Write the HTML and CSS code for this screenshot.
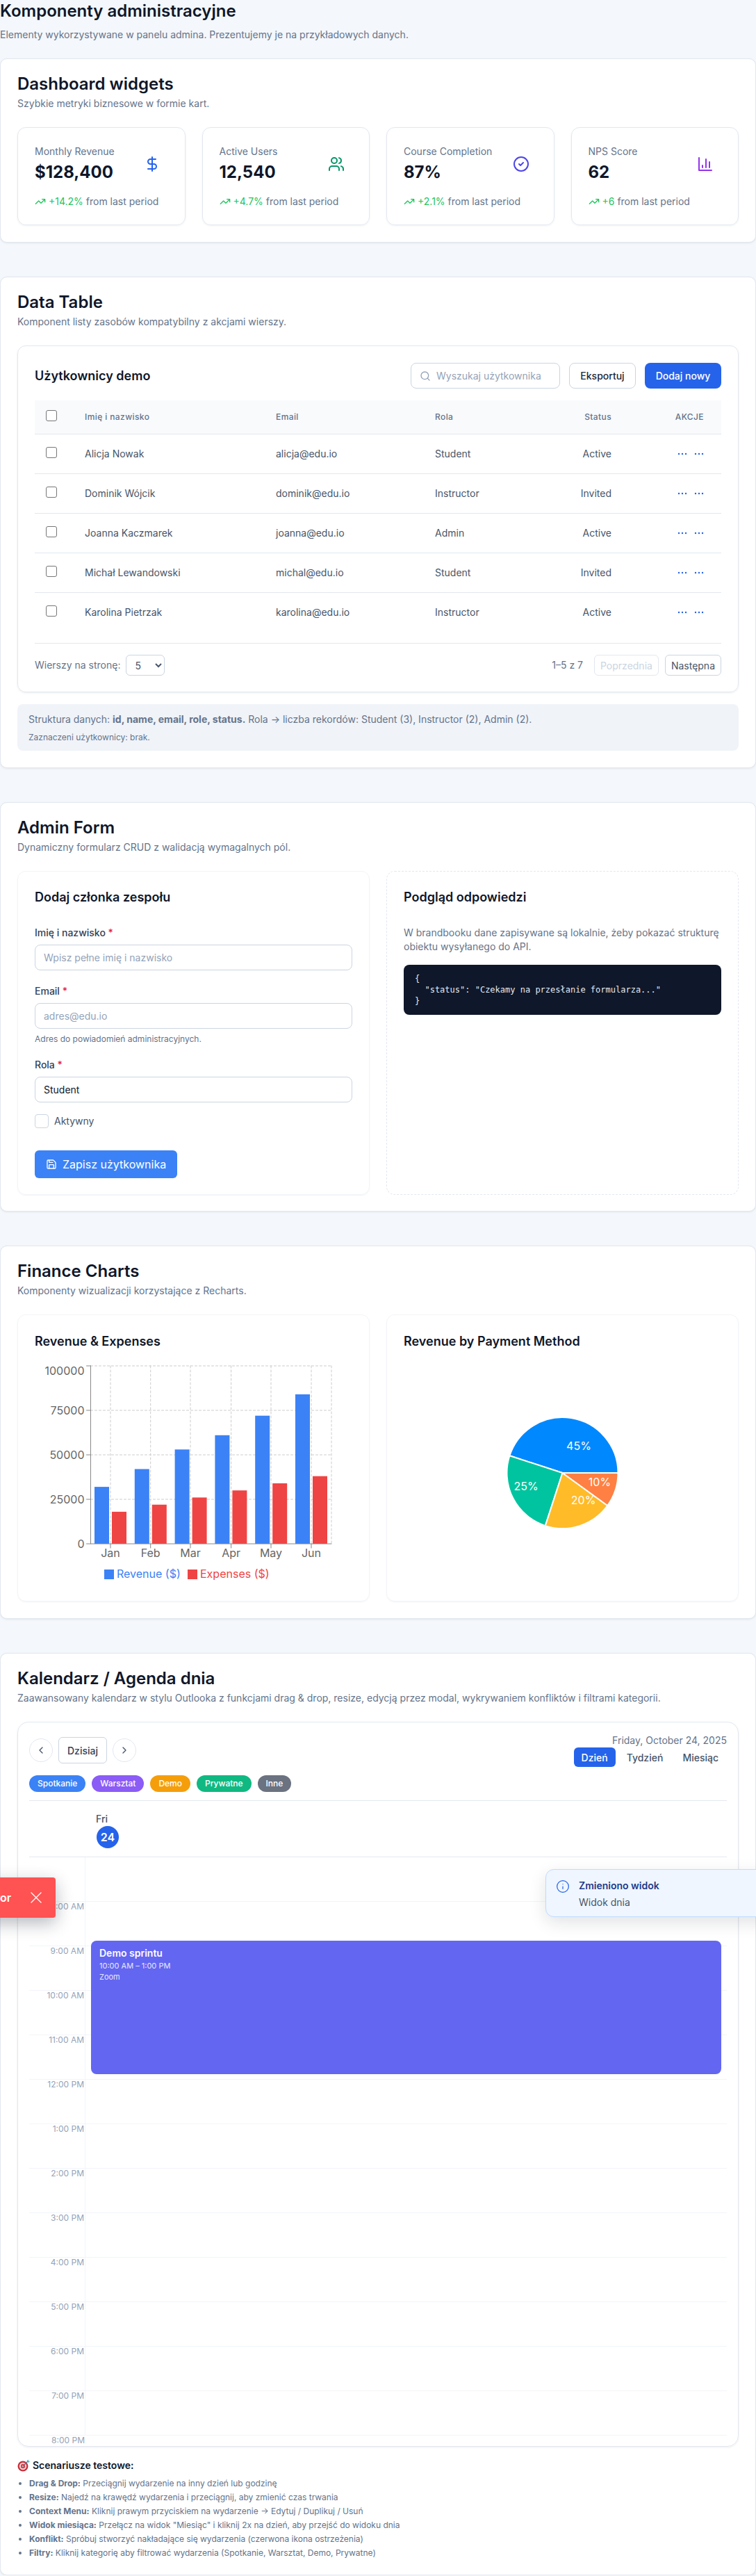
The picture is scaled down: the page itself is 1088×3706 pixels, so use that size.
FILE: index.html
```html
<!DOCTYPE html>
<html lang="pl">
<head>
  <meta charset="UTF-8">
  <title>Komponenty administracyjne</title>
  <meta name="viewport" content="width=device-width, initial-scale=1">
  <link rel="stylesheet" href="styles.css">
</head>
<body>

<svg class="defs" width="0" height="0">
  <symbol id="trend" viewBox="0 0 24 24"><path d="M22 7l-8.500 8.500-5-5L2 17M16 7h6v6"/></symbol>
  <symbol id="dots" viewBox="0 0 14 4"><circle cx="2" cy="2" r="1.200"/><circle cx="7" cy="2" r="1.200"/><circle cx="12" cy="2" r="1.200"/></symbol>
</svg>

<header class="page-head">
  <h1>Komponenty administracyjne</h1>
  <p>Elementy wykorzystywane w panelu admina. Prezentujemy je na przykładowych danych.</p>
</header>

<!-- widgety -->
<section class="section">
  <h2>Dashboard widgets</h2>
  <p class="sub">Szybkie metryki biznesowe w formie kart.</p>
  <div class="widgets">
    <div class="widget">
      <div class="widget-top">
        <div>
          <div class="widget-label">Monthly Revenue</div>
          <div class="widget-value">$128,400</div>
        </div>
        <svg class="icon-24 c-blue" viewBox="0 0 24 24"><path d="M12 2v20M17 5H9.500a3.500 3.500 0 0 0 0 7h5a3.500 3.500 0 0 1 0 7H6"/></svg>
      </div>
      <div class="trend"><svg class="icon-trend"><use href="#trend"/></svg><span class="up">+14.2%</span> from last period</div>
    </div>
    <div class="widget">
      <div class="widget-top">
        <div>
          <div class="widget-label">Active Users</div>
          <div class="widget-value">12,540</div>
        </div>
        <svg class="icon-24 c-green" viewBox="0 0 24 24"><path d="M16 21v-2a4 4 0 0 0-4-4H6a4 4 0 0 0-4 4v2M22 21v-2a4 4 0 0 0-3-3.870M16 3.130a4 4 0 0 1 0 7.750"/><circle cx="9" cy="7" r="4"/></svg>
      </div>
      <div class="trend"><svg class="icon-trend"><use href="#trend"/></svg><span class="up">+4.7%</span> from last period</div>
    </div>
    <div class="widget">
      <div class="widget-top">
        <div>
          <div class="widget-label">Course Completion</div>
          <div class="widget-value">87%</div>
        </div>
        <svg class="icon-24 c-indigo" viewBox="0 0 24 24"><circle cx="12" cy="12" r="10"/><path d="M9 12l2 2 4-4"/></svg>
      </div>
      <div class="trend"><svg class="icon-trend"><use href="#trend"/></svg><span class="up">+2.1%</span> from last period</div>
    </div>
    <div class="widget">
      <div class="widget-top">
        <div>
          <div class="widget-label">NPS Score</div>
          <div class="widget-value">62</div>
        </div>
        <svg class="icon-24 c-purple" viewBox="0 0 24 24"><path d="M3 3v18h18M18 17V9M13 17V5M8 17v-3"/></svg>
      </div>
      <div class="trend"><svg class="icon-trend"><use href="#trend"/></svg><span class="up">+6</span> from last period</div>
    </div>
  </div>
</section>

<!-- tabela -->
<section class="section">
  <h2>Data Table</h2>
  <p class="sub">Komponent listy zasobów kompatybilny z akcjami wierszy.</p>
  <div class="table-card">
    <div class="table-bar">
      <h3>Użytkownicy demo</h3>
      <div class="table-tools">
        <label class="search">
          <svg class="icon-16" viewBox="0 0 24 24"><circle cx="11" cy="11" r="8"/><path d="M21 21l-4.300-4.300"/></svg>
          <input type="text" placeholder="Wyszukaj użytkownika">
        </label>
        <button class="btn-outline">Eksportuj</button>
        <button class="btn-blue">Dodaj nowy</button>
      </div>
    </div>
    <table class="users">
      <colgroup>
        <col class="col-check"><col class="col-name"><col class="col-email"><col class="col-role"><col class="col-actions">
      </colgroup>
      <thead>
        <tr>
          <th><input class="check" type="checkbox"></th>
          <th>Imię i nazwisko</th>
          <th>Email</th>
          <th>Rola</th>
          <th class="status-cell"><span class="status-pos">Status</span><span class="actions-head">AKCJE</span></th>
        </tr>
      </thead>
      <tbody>
        <tr>
          <td><input class="check" type="checkbox"></td><td>Alicja Nowak</td><td>alicja@edu.io</td><td>Student</td>
          <td class="status-cell"><span class="status-pos">Active</span><span class="row-actions"><svg><use href="#dots"/></svg><svg><use href="#dots"/></svg></span></td>
        </tr>
        <tr>
          <td><input class="check" type="checkbox"></td><td>Dominik Wójcik</td><td>dominik@edu.io</td><td>Instructor</td>
          <td class="status-cell"><span class="status-pos">Invited</span><span class="row-actions"><svg><use href="#dots"/></svg><svg><use href="#dots"/></svg></span></td>
        </tr>
        <tr>
          <td><input class="check" type="checkbox"></td><td>Joanna Kaczmarek</td><td>joanna@edu.io</td><td>Admin</td>
          <td class="status-cell"><span class="status-pos">Active</span><span class="row-actions"><svg><use href="#dots"/></svg><svg><use href="#dots"/></svg></span></td>
        </tr>
        <tr>
          <td><input class="check" type="checkbox"></td><td>Michał Lewandowski</td><td>michal@edu.io</td><td>Student</td>
          <td class="status-cell"><span class="status-pos">Invited</span><span class="row-actions"><svg><use href="#dots"/></svg><svg><use href="#dots"/></svg></span></td>
        </tr>
        <tr>
          <td><input class="check" type="checkbox"></td><td>Karolina Pietrzak</td><td>karolina@edu.io</td><td>Instructor</td>
          <td class="status-cell"><span class="status-pos">Active</span><span class="row-actions"><svg><use href="#dots"/></svg><svg><use href="#dots"/></svg></span></td>
        </tr>
      </tbody>
    </table>
    <div class="table-foot">
      <div class="per-page">
        <span>Wierszy na stronę:</span>
        <select class="per-select"><option>5</option></select>
      </div>
      <div class="pager">
        <span class="pager-count">1–5 z 7</span>
        <button class="btn-page" disabled>Poprzednia</button>
        <button class="btn-page">Następna</button>
      </div>
    </div>
  </div>
  <div class="info-box">
    <p>Struktura danych: <strong>id, name, email, role, status.</strong> Rola → liczba rekordów: Student (3), Instructor (2), Admin (2).</p>
    <p class="info-small">Zaznaczeni użytkownicy: brak.</p>
  </div>
</section>

<!-- formularz -->
<section class="section section-form">
  <h2>Admin Form</h2>
  <p class="sub">Dynamiczny formularz CRUD z walidacją wymagalnych pól.</p>
  <div class="two-cols">
    <form class="panel panel-form">
      <h3 class="panel-title">Dodaj członka zespołu</h3>
      <label class="field-label" for="f-name">Imię i nazwisko <span class="req">*</span></label>
      <input class="field" id="f-name" type="text" placeholder="Wpisz pełne imię i nazwisko">
      <label class="field-label" for="f-email">Email <span class="req">*</span></label>
      <input class="field" id="f-email" type="text" placeholder="adres@edu.io">
      <div class="hint">Adres do powiadomień administracyjnych.</div>
      <label class="field-label" for="f-role">Rola <span class="req">*</span></label>
      <select class="field field-select" id="f-role"><option>Student</option></select>
      <label class="active-row"><span class="active-box"></span>Aktywny</label>
      <button class="btn-save" type="button">
        <svg class="icon-16" viewBox="0 0 24 24"><path d="M15.200 3a2 2 0 0 1 1.400.6l3.800 3.800a2 2 0 0 1 .6 1.400V19a2 2 0 0 1-2 2H5a2 2 0 0 1-2-2V5a2 2 0 0 1 2-2zM17 21v-7a1 1 0 0 0-1-1H8a1 1 0 0 0-1 1v7M7 3v4a1 1 0 0 0 1 1h7"/></svg>
        Zapisz użytkownika
      </button>
    </form>
    <div class="panel panel-dashed">
      <h3 class="panel-title">Podgląd odpowiedzi</h3>
      <p class="preview-text">W brandbooku dane zapisywane są lokalnie, żeby pokazać strukturę obiektu wysyłanego do API.</p>
      <pre class="code">{
  "status": "Czekamy na przesłanie formularza..."
}</pre>
    </div>
  </div>
</section>

<!-- wykresy -->
<section class="section">
  <h2>Finance Charts</h2>
  <p class="sub">Komponenty wizualizacji korzystające z Recharts.</p>
  <div class="two-cols">
    <div class="panel chart-panel">
      <h3 class="chart-title">Revenue &amp; Expenses</h3>
      <svg class="chart" viewBox="0 0 457 330">
        <g class="grid">
          <path d="M80.500 15H427M80.500 79H427M80.500 143H427M80.500 207H427"/>
          <path d="M109 15V271M166.700 15V271M224 15V271M282.600 15V271M340 15V271M398 15V271M427 15V271"/>
        </g>
        <g fill="#3b82f6">
          <rect x="86" y="189.100" width="21" height="81.900"/>
          <rect x="143.800" y="163.500" width="21" height="107.500"/>
          <rect x="201.600" y="135.300" width="21" height="135.700"/>
          <rect x="259.400" y="114.800" width="21" height="156.200"/>
          <rect x="317.200" y="86.700" width="21" height="184.300"/>
          <rect x="375" y="56" width="21" height="215"/>
        </g>
        <g fill="#ef4444">
          <rect x="111" y="224.900" width="21" height="46.100"/>
          <rect x="168.800" y="214.700" width="21" height="56.300"/>
          <rect x="226.600" y="204.400" width="21" height="66.600"/>
          <rect x="284.400" y="194.200" width="21" height="76.800"/>
          <rect x="342.200" y="184" width="21" height="87"/>
          <rect x="400" y="173.700" width="21" height="97.300"/>
        </g>
        <path class="axis" d="M80.500 15V271H427M74.500 15h6M74.500 79h6M74.500 143h6M74.500 207h6M74.500 271h6M109 271v6M166.700 271v6M224 271v6M282.600 271v6M340 271v6M398 271v6"/>
        <g class="tick-y">
          <text x="71.500" y="28">100000</text>
          <text x="71.500" y="85">75000</text>
          <text x="71.500" y="149">50000</text>
          <text x="71.500" y="213">25000</text>
          <text x="71.500" y="277">0</text>
        </g>
        <g class="tick-x">
          <text x="109" y="290">Jan</text>
          <text x="166.700" y="290">Feb</text>
          <text x="224" y="290">Mar</text>
          <text x="282.600" y="290">Apr</text>
          <text x="340" y="290">May</text>
          <text x="398" y="290">Jun</text>
        </g>
        <rect x="100" y="308" width="14" height="14" fill="#3b82f6"/>
        <text class="legend" x="118" y="320" fill="#3b82f6">Revenue ($)</text>
        <rect x="220" y="308" width="14" height="14" fill="#ef4444"/>
        <text class="legend" x="238" y="320" fill="#ef4444">Expenses ($)</text>
      </svg>
    </div>
    <div class="panel chart-panel">
      <h3 class="chart-title">Revenue by Payment Method</h3>
      <svg class="chart" viewBox="0 0 457 330">
        <g stroke="#fff">
          <path fill="#0088fe" d="M228.500 169L308.500 169A80 80 0 0 0 152.420 144.280Z"/>
          <path fill="#00c49f" d="M228.500 169L152.420 144.280A80 80 0 0 0 203.780 245.080Z"/>
          <path fill="#ffbb28" d="M228.500 169L203.780 245.080A80 80 0 0 0 293.220 216.020Z"/>
          <path fill="#ff8042" d="M228.500 169L293.220 216.020A80 80 0 0 0 308.500 169Z"/>
        </g>
        <g class="pie-label">
          <text x="252" y="136">45%</text>
          <text x="176" y="194">25%</text>
          <text x="258.600" y="214">20%</text>
          <text x="282" y="188">10%</text>
        </g>
      </svg>
    </div>
  </div>
</section>

<!-- kalendarz -->
<section class="section section-last">
  <h2>Kalendarz / Agenda dnia</h2>
  <p class="sub">Zaawansowany kalendarz w stylu Outlooka z funkcjami drag &amp; drop, resize, edycją przez modal, wykrywaniem konfliktów i filtrami kategorii.</p>
  <div class="calendar">
    <div class="cal-toolbar">
      <div class="cal-nav">
        <button class="btn-round"><svg class="icon-16" viewBox="0 0 24 24"><path d="M15 18l-6-6 6-6"/></svg></button>
        <button class="btn-today">Dzisiaj</button>
        <button class="btn-round"><svg class="icon-16" viewBox="0 0 24 24"><path d="M9 18l6-6-6-6"/></svg></button>
      </div>
      <div class="cal-right">
        <div class="cal-date">Friday, October 24, 2025</div>
        <div class="cal-views">
          <button class="view view-on">Dzień</button>
          <button class="view">Tydzień</button>
          <button class="view">Miesiąc</button>
        </div>
      </div>
    </div>
    <div class="chips">
      <span class="chip chip-blue">Spotkanie</span>
      <span class="chip chip-violet">Warsztat</span>
      <span class="chip chip-amber">Demo</span>
      <span class="chip chip-green">Prywatne</span>
      <span class="chip chip-gray">Inne</span>
    </div>
    <div class="cal-head">
      <div class="cal-day">Fri</div>
      <div class="cal-num">24</div>
    </div>
    <div class="hours">
      <div class="hour hour-first"><div class="hour-time"></div></div>
      <div class="hour"><div class="hour-time">8:00 AM</div></div>
      <div class="hour"><div class="hour-time">9:00 AM</div></div>
      <div class="hour"><div class="hour-time">10:00 AM</div></div>
      <div class="hour"><div class="hour-time">11:00 AM</div></div>
      <div class="hour"><div class="hour-time">12:00 PM</div></div>
      <div class="hour"><div class="hour-time">1:00 PM</div></div>
      <div class="hour"><div class="hour-time">2:00 PM</div></div>
      <div class="hour"><div class="hour-time">3:00 PM</div></div>
      <div class="hour"><div class="hour-time">4:00 PM</div></div>
      <div class="hour"><div class="hour-time">5:00 PM</div></div>
      <div class="hour"><div class="hour-time">6:00 PM</div></div>
      <div class="hour"><div class="hour-time">7:00 PM</div></div>
      <div class="hour hour-last"><div class="hour-time">8:00 PM</div></div>
      <div class="event">
        <div class="event-title">Demo sprintu</div>
        <div class="event-meta">10:00 AM – 1:00 PM</div>
        <div class="event-meta">Zoom</div>
      </div>
    </div>
  </div>
  <div class="scenarios">
    <div class="scenarios-title">
      <svg class="target" viewBox="0 0 18 18">
        <circle cx="8" cy="10" r="7.500" fill="#c62f3b"/>
        <circle cx="8" cy="10" r="5.200" fill="#f4d7d5"/>
        <circle cx="8" cy="10" r="3.200" fill="#d93a45"/>
        <circle cx="8" cy="10" r="1.300" fill="#f4d7d5"/>
        <path d="M8 10l7-7" stroke="#64748b" stroke-width="1.200"/>
        <path d="M13.500 2.500l2-2 .5 2 2 .5-2 2z" fill="#3bb6c6"/>
      </svg>
      Scenariusze testowe:
    </div>
    <ul class="scenarios-list">
      <li><strong>Drag &amp; Drop:</strong> Przeciągnij wydarzenie na inny dzień lub godzinę</li>
      <li><strong>Resize:</strong> Najedź na krawędź wydarzenia i przeciągnij, aby zmienić czas trwania</li>
      <li><strong>Context Menu:</strong> Kliknij prawym przyciskiem na wydarzenie → Edytuj / Duplikuj / Usuń</li>
      <li><strong>Widok miesiąca:</strong> Przełącz na widok "Miesiąc" i kliknij 2x na dzień, aby przejść do widoku dnia</li>
      <li><strong>Konflikt:</strong> Spróbuj stworzyć nakładające się wydarzenia (czerwona ikona ostrzeżenia)</li>
      <li><strong>Filtry:</strong> Kliknij kategorię aby filtrować wydarzenia (Spotkanie, Warsztat, Demo, Prywatne)</li>
    </ul>
  </div>
</section>

<!-- powiadomienia -->
<div class="toast-error">
  <span>Error</span>
  <svg class="toast-x" viewBox="0 0 24 24"><path d="M18 6L6 18M6 6l12 12"/></svg>
</div>
<div class="toast-info">
  <svg class="toast-icon" viewBox="0 0 24 24"><circle cx="12" cy="12" r="10"/><path d="M12 16v-4M12 8h.01"/></svg>
  <div>
    <div class="toast-title">Zmieniono widok</div>
    <div class="toast-body">Widok dnia</div>
  </div>
</div>

</body>
</html>
```

FILE: styles.css
```css
* {
  box-sizing: border-box;
}

body {
  font-family: Inter, "Noto Sans", sans-serif;
  background: #f4f7fb;
  color: #0f172a;
  margin: 0;
  position: relative;
  overflow-x: hidden;
  font-size: 14px;
  line-height: 20px;
}

.defs {
  position: absolute;
}

button, input, select {
  font-family: inherit;
}

svg {
  fill: none;
  stroke: currentColor;
  stroke-width: 2;
  stroke-linecap: round;
  stroke-linejoin: round;
}

/* naglowek strony */
.page-head {
  height: 84px;
}

h1 {
  font-size: 24px;
  line-height: 32px;
  font-weight: 600;
  margin: 0;
}

.page-head p {
  margin: 8px 0 0;
  color: #64748b;
}

.section {
  background: white;
  border: 1px solid #e2e8f0;
  border-radius: 10px;
  box-shadow: 0 1px 3px rgba(15, 23, 42, 0.08);
  padding: 24px;
  margin-bottom: 49px;
}

.section-form {
  padding-bottom: 23px;
}

.section-last {
  margin-bottom: 0;
  padding-bottom: 21px;
}

h2 {
  font-size: 24px;
  line-height: 24px;
  font-weight: 600;
  margin: 0;
}

.sub {
  margin: 6px 0 24px;
  color: #64748b;
}

/* widgety */
.widgets {
  display: grid;
  grid-template-columns: repeat(4, 1fr);
  gap: 24px;
}

.widget {
  border: 1px solid #e2e8f0;
  border-radius: 12px;
  padding: 24px;
  height: 141px;
  box-shadow: 0 1px 3px rgba(15, 23, 42, 0.06);
}

.widget-top {
  display: flex;
  justify-content: space-between;
  align-items: center;
  height: 56px;
}

.widget-top .icon-24 {
  margin-right: 11px;
}

.widget-label {
  color: #64748b;
}

.widget-value {
  font-size: 24px;
  line-height: 32px;
  font-weight: 700;
  margin-top: 4px;
}

.icon-24 {
  width: 24px;
  height: 24px;
  flex-shrink: 0;
}

.icon-16 {
  width: 16px;
  height: 16px;
  flex-shrink: 0;
}

.c-blue { color: #2563eb; }
.c-green { color: #059669; }
.c-indigo { color: #4f46e5; }
.c-purple { color: #9333ea; }

.trend {
  display: flex;
  align-items: center;
  margin-top: 16px;
  color: #64748b;
  white-space: pre;
}

.icon-trend {
  width: 16px;
  height: 16px;
  color: #22c55e;
  margin-right: 4px;
}

.up {
  color: #22c55e;
}

/* tabela */
.table-card {
  border: 1px solid #e2e8f0;
  border-radius: 12px;
  padding: 24px;
  height: 499px;
  box-shadow: 0 1px 3px rgba(15, 23, 42, 0.08);
}

.table-bar {
  display: flex;
  justify-content: space-between;
  align-items: center;
  height: 37px;
  margin-bottom: 17px;
}

h3 {
  font-size: 18px;
  line-height: 26px;
  font-weight: 600;
  margin: 0;
}

.table-tools {
  display: flex;
  gap: 13px;
}

.search {
  display: flex;
  align-items: center;
  gap: 8px;
  width: 215px;
  height: 37px;
  border: 1px solid #cbd5e1;
  border-radius: 8px;
  padding: 0 12px;
  color: #94a3b8;
}

.search input {
  border: none;
  outline: none;
  width: 100%;
  padding: 0;
  font-size: 14px;
}

.search input::placeholder,
.field::placeholder {
  color: #94a3b8;
}

.btn-outline {
  height: 37px;
  width: 96px;
  background: white;
  border: 1px solid #cbd5e1;
  border-radius: 8px;
  font-size: 14px;
  font-weight: 500;
  color: #1e293b;
}

.btn-blue {
  height: 37px;
  width: 110px;
  background: #2563eb;
  border: none;
  border-radius: 8px;
  font-size: 14px;
  font-weight: 500;
  color: white;
}

.users {
  width: 100%;
  table-layout: fixed;
  border-collapse: collapse;
}

.col-check { width: 72px; }
.col-name { width: 275px; }
.col-email { width: 229px; }
.col-role { width: 254px; }
.col-actions { width: 158px; }

.users th {
  height: 48px;
  background: #f8fafc;
  border-bottom: 1px solid #e2e8f0;
  font-size: 12px;
  font-weight: 500;
  letter-spacing: 0.4px;
  color: #64748b;
  text-align: left;
  padding: 0;
}

.users td {
  height: 57px;
  border-bottom: 1px solid #e2e8f0;
  color: #475569;
  padding: 0;
}

.users tbody tr:last-child td {
  border-bottom: none;
}

.check {
  appearance: none;
  display: block;
  width: 16px;
  height: 16px;
  margin: -3px 0 0 16px;
  background: white;
  border: 1px solid #767676;
  border-radius: 3px;
}

.status-cell {
  position: relative;
}

/* status jest wyrownany do prawej krawedzi kolumny roli */
.status-pos {
  position: absolute;
  right: 100%;
  top: 50%;
  transform: translateY(-50%);
}

.actions-head {
  display: block;
  text-align: right;
  padding-right: 25px;
  letter-spacing: 0.4px;
}

.row-actions {
  display: flex;
  justify-content: flex-end;
  gap: 10px;
  padding-right: 25px;
  color: #2563eb;
}

.row-actions svg {
  width: 14px;
  height: 4px;
  fill: currentColor;
  stroke: none;
}

.table-foot {
  display: flex;
  justify-content: space-between;
  align-items: center;
  border-top: 1px solid #e2e8f0;
  margin-top: 16px;
  padding-top: 16px;
  color: #64748b;
}

.per-page {
  display: flex;
  align-items: center;
  gap: 8px;
}

.per-select {
  width: 56px;
  height: 30px;
  background: white;
  border: 1px solid #cbd5e1;
  border-radius: 6px;
  padding: 0 8px;
  font-size: 14px;
  color: #475569;
}

.pager {
  display: flex;
  align-items: center;
  gap: 9px;
}

.pager-count {
  margin-right: 7px;
}

.btn-page {
  height: 30px;
  padding: 0 8px;
  background: white;
  border: 1px solid #cbd5e1;
  border-radius: 6px;
  font-size: 14px;
  color: #475569;
}

.btn-page:disabled {
  color: #cbd5e1;
  border-color: #e2e8f0;
}

.info-box {
  background: #f0f3f8;
  border-radius: 8px;
  margin-top: 17px;
  padding: 12px 16px 11px;
  color: #64748b;
}

.info-box p {
  margin: 0;
}

.info-box .info-small {
  font-size: 12px;
  line-height: 16px;
  margin-top: 8px;
}

/* dwie kolumny */
.two-cols {
  display: grid;
  grid-template-columns: 1fr 1fr;
  gap: 24px;
}

.panel {
  border: 1px solid #f1f5f9;
  border-radius: 12px;
  padding: 24px;
  box-shadow: 0 1px 2px rgba(15, 23, 42, 0.05);
}

.panel-form {
  padding-bottom: 23px;
}

.panel-dashed {
  border: 1px dashed #e2e8f0;
  box-shadow: none;
}

.panel-title {
  margin-bottom: 28px;
}

.field-label {
  display: block;
  font-weight: 500;
  color: #334155;
  margin-bottom: 7px;
}

.req {
  color: #e11d48;
}

.field {
  display: block;
  width: 100%;
  height: 37px;
  background: white;
  border: 1px solid #cbd5e1;
  border-radius: 8px;
  padding: 0 12px;
  margin-bottom: 20px;
  font-size: 14px;
  color: #0f172a;
}

.field-select {
  appearance: none;
  margin-bottom: 17px;
}

.hint {
  font-size: 12px;
  line-height: 16px;
  color: #64748b;
  margin: -13px 0 19px;
}

.active-row {
  display: flex;
  align-items: center;
  gap: 8px;
  color: #475569;
  height: 20px;
}

.active-box {
  width: 20px;
  height: 20px;
  border: 1px solid #cbd5e1;
  border-radius: 4px;
}

.btn-save {
  display: flex;
  align-items: center;
  gap: 8px;
  height: 40px;
  margin-top: 32px;
  padding: 0 16px;
  background: #3b82f6;
  border: none;
  border-radius: 6px;
  color: white;
  font-size: 16px;
}

.preview-text {
  color: #64748b;
  margin: 0 0 16px;
}

.code {
  background: #0f172a;
  color: #e2e8f0;
  border-radius: 8px;
  margin: 0;
  padding: 12px 16px;
  font-family: "DejaVu Sans Mono", monospace;
  font-size: 12px;
  line-height: 16px;
}

/* wykresy */
.chart-panel {
  height: 413px;
}

.chart-title {
  line-height: 26px;
  margin-top: 1px;
}

.chart {
  display: block;
  width: 457px;
  height: 330px;
  margin-top: 7px;
  stroke: none;
  font-size: 16px;
}

.chart text {
  stroke: none;
}

.grid path {
  stroke: #ccc;
  stroke-width: 1;
  stroke-dasharray: 3 3;
}

.axis {
  stroke: #888;
  stroke-width: 1;
}

.tick-y text {
  fill: #666;
  text-anchor: end;
}

.tick-x text {
  fill: #666;
  text-anchor: middle;
}

.pie-label text {
  fill: white;
  text-anchor: middle;
}

/* kalendarz */
.calendar {
  border: 1px solid #e2e8f0;
  border-radius: 16px;
  padding: 16px 16px 0;
  height: 1043px;
  overflow: hidden;
  box-shadow: 0 1px 3px rgba(15, 23, 42, 0.08);
}

.cal-toolbar {
  display: flex;
  justify-content: space-between;
  align-items: center;
}

.cal-nav {
  display: flex;
  align-items: center;
  gap: 8px;
}

.btn-round {
  display: flex;
  align-items: center;
  justify-content: center;
  width: 34px;
  height: 34px;
  padding: 0;
  background: white;
  border: 1px solid #e2e8f0;
  border-radius: 50%;
  color: #475569;
}

.btn-today {
  height: 38px;
  width: 70px;
  padding: 0;
  background: white;
  border: 1px solid #cbd5e1;
  border-radius: 6px;
  font-size: 14px;
  font-weight: 500;
  color: #334155;
}

.cal-right {
  display: flex;
  flex-direction: column;
  align-items: flex-end;
}

.cal-date {
  color: #64748b;
}

.cal-views {
  display: flex;
  gap: 4px;
}

.view {
  height: 28px;
  padding: 0 12px;
  background: none;
  border: none;
  border-radius: 6px;
  font-size: 14px;
  font-weight: 500;
  color: #475569;
}

.view-on {
  background: #2563eb;
  color: white;
  padding: 0 11px;
}

.chips {
  display: flex;
  gap: 9px;
  margin-top: 12px;
  padding-bottom: 12px;
  border-bottom: 1px solid #e2e8f0;
}

.chip {
  height: 24px;
  line-height: 24px;
  padding: 0 12px;
  border-radius: 12px;
  font-size: 12px;
  font-weight: 500;
  color: white;
}

.chip-blue { background: #3b82f6; }
.chip-violet { background: #8b5cf6; }
.chip-amber { background: #f59e0b; }
.chip-green { background: #10b981; }
.chip-gray { background: #6b7280; }

.cal-head {
  height: 81px;
  padding: 16px 0 0 96px;
  border-bottom: 1px solid #e2e8f0;
}

.cal-day {
  color: #475569;
  font-weight: 500;
  height: 20px;
}

.cal-num {
  width: 32px;
  height: 32px;
  line-height: 32px;
  margin: 0 0 0 1px;
  background: #2563eb;
  border-radius: 50%;
  color: white;
  font-size: 16px;
  font-weight: 600;
  text-align: center;
}

.hours {
  position: relative;
}

.hour {
  height: 64px;
  border-top: 1px solid #f1f5f9;
}

.hour-first {
  height: 63px;
  border-top: none;
}

.hour-time {
  width: 81px;
  height: 100%;
  border-right: 1px solid #f1f5f9;
  padding: 0 1px 0 0;
  text-align: right;
  font-size: 12px;
  line-height: 14px;
  color: #94a3b8;
}

.hour-last .hour-time {
  border-right: none;
}

.event {
  position: absolute;
  top: 120px;
  left: 89px;
  right: 8px;
  height: 192px;
  background: #6366f1;
  border-radius: 8px;
  padding: 8px 12px;
  color: white;
}

.event-title {
  font-weight: 600;
}

.event-meta {
  font-size: 11px;
  line-height: 16px;
  opacity: 0.85;
}

.scenarios {
  margin-top: 17px;
}

.scenarios-title {
  display: flex;
  align-items: center;
  gap: 4px;
  font-weight: 600;
  margin-bottom: 6px;
}

.target {
  width: 18px;
  height: 18px;
  stroke: none;
}

.scenarios-list {
  margin: 0;
  padding-left: 17px;
  font-size: 12px;
  color: #64748b;
}

/* powiadomienia */
.toast-error {
  position: absolute;
  top: 2701px;
  left: -60px;
  width: 140px;
  height: 58px;
  display: flex;
  align-items: center;
  justify-content: flex-end;
  gap: 22px;
  padding-right: 14px;
  background: #ff5252;
  border-radius: 4px;
  color: white;
  font-size: 16px;
  font-weight: 600;
  box-shadow: 0 8px 24px rgba(15, 23, 42, 0.3);
}

.toast-x {
  width: 28px;
  height: 28px;
  stroke-width: 1.200;
}

.toast-info {
  position: absolute;
  top: 2689px;
  left: 785px;
  width: 340px;
  height: 69px;
  display: flex;
  gap: 13px;
  padding: 13px 14px;
  background: #eff6ff;
  border: 1px solid #bfdbfe;
  border-radius: 12px;
  box-shadow: 0 8px 24px rgba(15, 23, 42, 0.12);
}

.toast-icon {
  width: 20px;
  height: 20px;
  margin-top: 1px;
  color: #2563eb;
  flex-shrink: 0;
  stroke-width: 1.500;
}

.toast-title {
  font-weight: 600;
  color: #1e3a8a;
}

.toast-body {
  margin-top: 4px;
  color: #475569;
}
```
